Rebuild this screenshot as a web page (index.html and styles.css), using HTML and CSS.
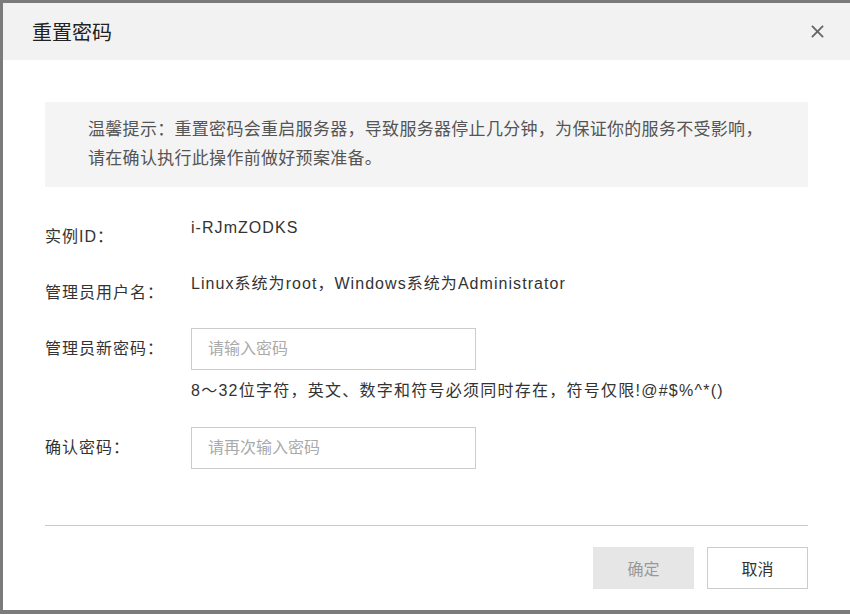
FILE: index.html
```html
<!DOCTYPE html>
<html lang="zh-CN">
<head>
    <meta charset="UTF-8">
    <title>重置密码</title>
    <link rel="stylesheet" href="styles.css">
</head>
<body>
    <div class="modal">
        <!-- Header -->
        <div class="modal-header">
            <span class="modal-title">重置密码</span>
            <svg class="close" width="14" height="14" viewBox="0 0 14 14">
                <path d="M1 1L13 13M13 1L1 13" stroke="#666" stroke-width="2" fill="none"/>
            </svg>
        </div>

        <div class="modal-body">
            <!-- Notice -->
            <div class="notice">
                温馨提示：重置密码会重启服务器，导致服务器停止几分钟，为保证你的服务不受影响，<br>
                请在确认执行此操作前做好预案准备。
            </div>

            <!-- Form -->
            <div class="row row-text first">
                <label class="label">实例ID：</label>
                <div class="value">i-RJmZODKS</div>
            </div>
            <div class="row row-text">
                <label class="label">管理员用户名：</label>
                <div class="value">Linux系统为root，Windows系统为Administrator</div>
            </div>
            <div class="row row-input">
                <label class="label" for="newPwd">管理员新密码：</label>
                <input type="password" id="newPwd" placeholder="请输入密码">
            </div>
            <div class="hint">8～32位字符，英文、数字和符号必须同时存在，符号仅限!@#$%^*()</div>
            <div class="row row-input last">
                <label class="label" for="confirmPwd">确认密码：</label>
                <input type="password" id="confirmPwd" placeholder="请再次输入密码">
            </div>

            <div class="divider"></div>

            <div class="actions">
                <button class="btn btn-disabled">确定</button>
                <button class="btn btn-cancel">取消</button>
            </div>
        </div>
    </div>
</body>
</html>
```

FILE: styles.css
```css
html, body {
    margin: 0;
    height: 100%;
    overflow: hidden;
}

body {
    background-color: #7b7b7b;
    font-family: "Liberation Sans", "Noto Sans CJK SC", sans-serif;
    color: #333;
}

.modal {
    margin: 3px 0 0 3px;
    width: 847px;
    height: 607px;
    background: #fff;
}

.modal-header {
    height: 57px;
    background: #f2f2f2;
    padding: 0 26px 0 29px;
    display: flex;
    align-items: center;
    justify-content: space-between;
}

.modal-title {
    font-size: 20px;
    color: #222;
}

.close {
    width: 13px;
    height: 13px;
}

.modal-body {
    padding: 42px 42px 0 42px;
}

.notice {
    background: #f4f4f4;
    height: 85px;
    box-sizing: border-box;
    padding: 13px 43px 0 43px;
    font-size: 17px;
    line-height: 29px;
    letter-spacing: 0.3px;
    color: #555;
}

.row {
    display: flex;
}

.row-text {
    align-items: flex-start;
    margin-top: 27px;
}

.row-text.first {
    margin-top: 31px;
}

.row-text .label {
    padding-top: 9px;
}

.label {
    width: 146px;
    flex-shrink: 0;
    font-size: 16px;
    line-height: 20px;
    letter-spacing: 1px;
}

.value {
    font-size: 16px;
    line-height: 20px;
    letter-spacing: 1.05px;
}

.row-input {
    align-items: center;
    margin-top: 25px;
}

.row-input.last {
    margin-top: 26px;
}

input {
    width: 285px;
    height: 42px;
    box-sizing: border-box;
    border: 1px solid #ccc;
    padding: 0 16px;
    font-family: inherit;
    font-size: 16px;
    outline: none;
}

input::placeholder {
    color: #aaa;
}

.hint {
    margin: 11px 0 0 146px;
    font-size: 16px;
    line-height: 20px;
    letter-spacing: 1.25px;
}

.divider {
    margin-top: 56px;
    border-top: 1px solid #c8c8c8;
}

.actions {
    margin-top: 21px;
    display: flex;
    justify-content: flex-end;
    gap: 13px;
}

.btn {
    width: 101px;
    height: 42px;
    font-family: inherit;
    font-size: 16px;
}

.btn-disabled {
    background: #e6e6e6;
    border: none;
    color: #999;
}

.btn-cancel {
    background: #fff;
    border: 1px solid #ccc;
    color: #333;
}
```
